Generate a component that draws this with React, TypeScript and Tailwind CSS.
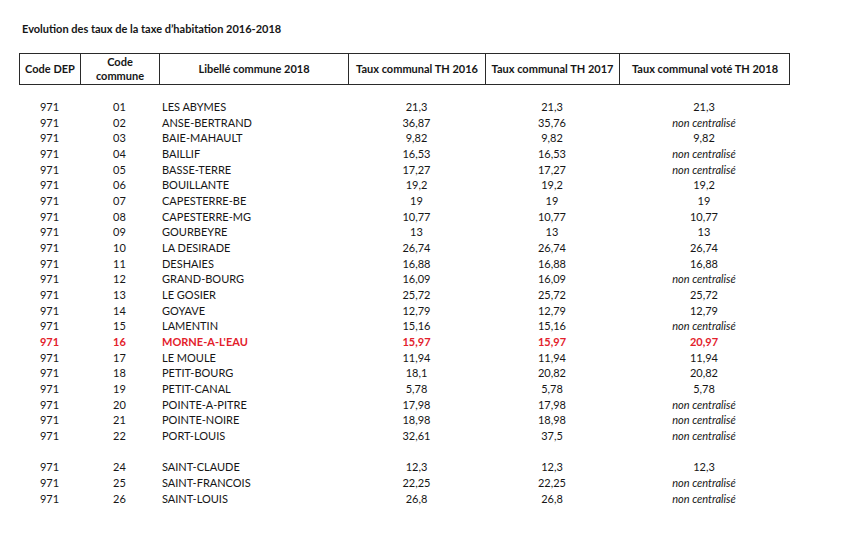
const rows: [string, string, string, string, string][] = [
  ['01', 'LES ABYMES', '21,3', '21,3', '21,3'],
  ['02', 'ANSE-BERTRAND', '36,87', '35,76', 'nc'],
  ['03', 'BAIE-MAHAULT', '9,82', '9,82', '9,82'],
  ['04', 'BAILLIF', '16,53', '16,53', 'nc'],
  ['05', 'BASSE-TERRE', '17,27', '17,27', 'nc'],
  ['06', 'BOUILLANTE', '19,2', '19,2', '19,2'],
  ['07', 'CAPESTERRE-BE', '19', '19', '19'],
  ['08', 'CAPESTERRE-MG', '10,77', '10,77', '10,77'],
  ['09', 'GOURBEYRE', '13', '13', '13'],
  ['10', 'LA DESIRADE', '26,74', '26,74', '26,74'],
  ['11', 'DESHAIES', '16,88', '16,88', '16,88'],
  ['12', 'GRAND-BOURG', '16,09', '16,09', 'nc'],
  ['13', 'LE GOSIER', '25,72', '25,72', '25,72'],
  ['14', 'GOYAVE', '12,79', '12,79', '12,79'],
  ['15', 'LAMENTIN', '15,16', '15,16', 'nc'],
  ['16', "MORNE-A-L'EAU", '15,97', '15,97', '20,97'],
  ['17', 'LE MOULE', '11,94', '11,94', '11,94'],
  ['18', 'PETIT-BOURG', '18,1', '20,82', '20,82'],
  ['19', 'PETIT-CANAL', '5,78', '5,78', '5,78'],
  ['20', 'POINTE-A-PITRE', '17,98', '17,98', 'nc'],
  ['21', 'POINTE-NOIRE', '18,98', '18,98', 'nc'],
  ['22', 'PORT-LOUIS', '32,61', '37,5', 'nc'],
  ['', '', '', '', ''],
  ['24', 'SAINT-CLAUDE', '12,3', '12,3', '12,3'],
  ['25', 'SAINT-FRANCOIS', '22,25', '22,25', 'nc'],
  ['26', 'SAINT-LOUIS', '26,8', '26,8', 'nc'],
];

// widths of the six columns, taken from the header borders
const cols = 'grid grid-cols-[61px_79px_189px_137px_134px_170px]';

export default function App() {
  return (
    <div className="w-[852px] h-[535px] bg-white text-[#161616] text-[11px]" style={{ fontFamily: 'Lato, "Liberation Sans", sans-serif' }}>
      <div className="pl-[22px] pt-[21px] h-[53px] font-bold text-[11px]">Evolution des taux de la taxe d’habitation 2016-2018</div>

      <div className="ml-[19px] w-[771px]">
        <div className={`${cols} h-[32px] border border-[#2a2a2a] font-bold`}>
          <div className="flex items-center justify-center border-r border-[#2a2a2a]">Code DEP</div>
          <div className="flex flex-col items-center justify-center leading-[14px] border-r border-[#2a2a2a]">
            <span>Code</span>
            <span>commune</span>
          </div>
          <div className="flex items-center justify-center border-r border-[#2a2a2a]">Libellé commune 2018</div>
          <div className="flex items-center justify-center border-r border-[#2a2a2a]">Taux communal TH 2016</div>
          <div className="flex items-center justify-center border-r border-[#2a2a2a]">Taux communal TH 2017</div>
          <div className="flex items-center justify-center">Taux communal voté TH 2018</div>
        </div>

        <div className="pt-[14px]">
          {rows.map((r, i) => {
            const red = r[0] === '16';
            const empty = r[0] === '';
            return (
              <div key={i} className={`${cols} h-[15.68px] leading-[15.68px] ${red ? 'text-[#e3212b] font-bold' : ''}`}>
                <div className="text-center">{empty ? '' : '971'}</div>
                <div className="text-center">{r[0]}</div>
                <div className="pl-[3px]">{r[1]}</div>
                <div className="text-center">{r[2]}</div>
                <div className="text-center">{r[3]}</div>
                <div className="text-center">
                  {r[4] === 'nc' ? <span className="italic">non centralisé</span> : r[4]}
                </div>
              </div>
            );
          })}
        </div>
      </div>
    </div>
  );
}
